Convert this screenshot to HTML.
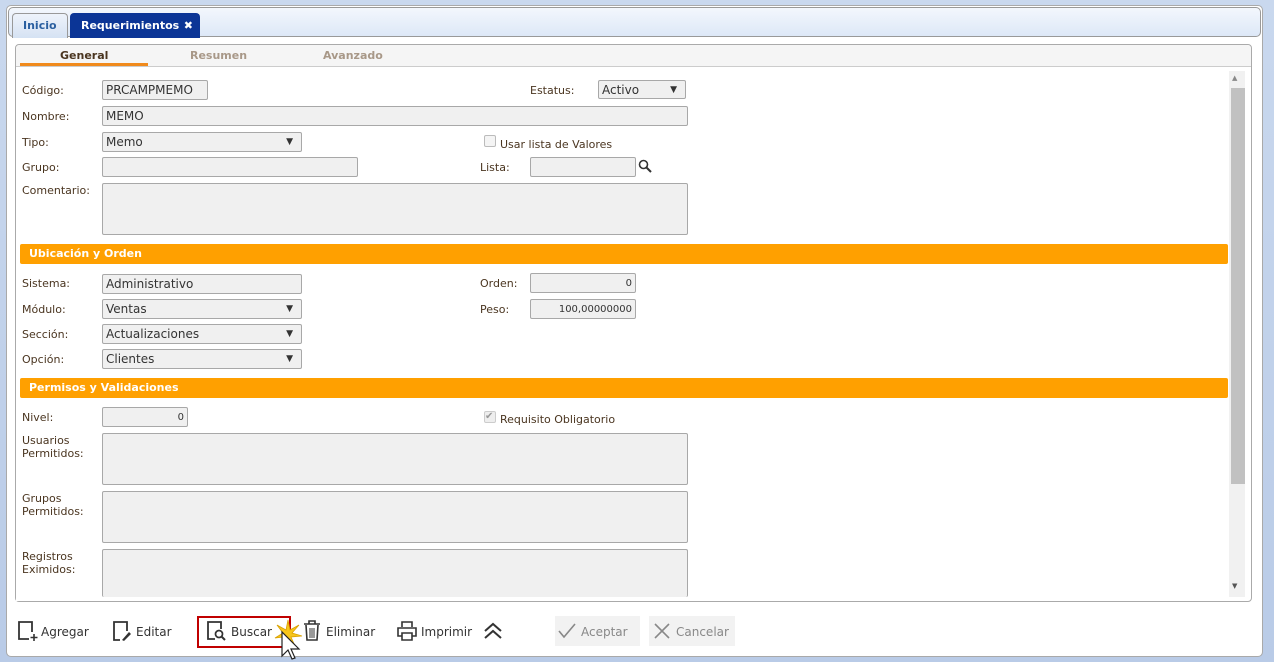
<!DOCTYPE html>
<html><head><meta charset="utf-8"><style>
*{box-sizing:border-box;margin:0;padding:0}
body{width:1274px;height:662px;overflow:hidden;background:linear-gradient(#c9d8ee,#b9cbe7);font-family:"DejaVu Sans","Liberation Sans",sans-serif;font-size:11px;color:#4a3520;position:relative}
.a{position:absolute}
#win{left:6px;top:5px;width:1257px;height:652px;background:#fff;border:1px solid #a9a9a9;border-radius:5px}
#tabbar{left:8px;top:7px;width:1253px;height:30px;background:linear-gradient(#f3f7fd,#dde8f7);border:1px solid #999;border-radius:5px}
.tab{position:absolute;top:5px;height:25px;border:1px solid #999;border-bottom:none;border-radius:4px 4px 0 0;font-weight:bold;font-size:11px;line-height:23px;padding:0 10px}
#inner{left:15px;top:44px;width:1237px;height:558px;border:1px solid #aaa;border-radius:4px}
#strip{left:16px;top:45px;width:1235px;height:22px;background:#f5f5f5;border-bottom:1px solid #ccc;border-radius:4px 4px 0 0}
.st{position:absolute;top:49px;font-weight:bold;font-size:11px;color:#a89888}
.l{position:absolute;font-size:11px;line-height:13px}
.i{position:absolute;background:#f0f0f0;border:1px solid #a8a8a8;border-radius:2px;font-size:12px;color:#333;padding:0 3px;line-height:19px}
.s:after{content:"▼";position:absolute;right:8px;top:0;font-size:9px;color:#333}
.r{text-align:right}
.bar{position:absolute;left:20px;width:1208px;height:20px;background:#ffa000;color:#fff;font-weight:bold;font-size:11px;line-height:20px;padding-left:9px;border-radius:2px}
.b{position:absolute;top:621px;font-size:12px;color:#333;line-height:22px}
</style></head><body>
<div id="win" class="a"></div>
<div id="tabbar" class="a">
<div class="tab" style="left:3px;background:linear-gradient(#eef3fb,#d5e2f3);color:#2a5fa0">Inicio</div>
<div class="tab" style="left:61px;background:#0b3596;color:#fff;border-color:#0b3596;width:130px">Requerimientos<span style="position:absolute;right:6px">✖</span></div>
</div>
<div id="inner" class="a"></div>
<div id="strip" class="a"></div>
<div class="a" style="left:20px;top:63px;width:128px;height:3px;background:#f08a1c"></div>
<div class="st" style="left:60px;color:#4a3520">General</div>
<div class="st" style="left:190px">Resumen</div>
<div class="st" style="left:323px">Avanzado</div>

<div class="l" style="left:22px;top:84px">Código:</div>
<div class="i" style="left:102px;top:80px;width:106px;height:20px">PRCAMPMEMO</div>
<div class="l" style="left:530px;top:84px">Estatus:</div>
<div class="i s" style="left:598px;top:80px;width:88px;height:19px">Activo</div>
<div class="l" style="left:22px;top:110px">Nombre:</div>
<div class="i" style="left:102px;top:106px;width:586px;height:20px">MEMO</div>
<div class="l" style="left:22px;top:136px">Tipo:</div>
<div class="i s" style="left:102px;top:132px;width:200px;height:20px">Memo</div>
<div class="a" style="left:484px;top:135px;width:12px;height:12px;border:1px solid #bbb;border-radius:2px;background:#f4f4f4"></div>
<div class="l" style="left:500px;top:138px">Usar lista de Valores</div>
<div class="l" style="left:22px;top:161px">Grupo:</div>
<div class="i" style="left:102px;top:157px;width:256px;height:20px"></div>
<div class="l" style="left:480px;top:161px">Lista:</div>
<div class="i" style="left:530px;top:157px;width:106px;height:20px"></div>
<svg class="a" style="left:638px;top:159px" width="14" height="14"><circle cx="5.5" cy="5.5" r="4" fill="none" stroke="#333" stroke-width="1.6"/><path d="M8.5 8.5L13 13" stroke="#333" stroke-width="2"/></svg>
<div class="l" style="left:22px;top:184px">Comentario:</div>
<div class="i" style="left:102px;top:183px;width:586px;height:52px"></div>

<div class="bar" style="top:244px">Ubicación y Orden</div>
<div class="l" style="left:22px;top:277px">Sistema:</div>
<div class="i" style="left:102px;top:274px;width:200px;height:20px">Administrativo</div>
<div class="l" style="left:480px;top:277px">Orden:</div>
<div class="i r" style="left:530px;top:273px;width:106px;height:20px;font-size:10px">0</div>
<div class="l" style="left:22px;top:303px">Módulo:</div>
<div class="i s" style="left:102px;top:299px;width:200px;height:20px">Ventas</div>
<div class="l" style="left:480px;top:303px">Peso:</div>
<div class="i r" style="left:530px;top:299px;width:106px;height:20px;font-size:10px">100,00000000</div>
<div class="l" style="left:22px;top:328px">Sección:</div>
<div class="i s" style="left:102px;top:324px;width:200px;height:20px">Actualizaciones</div>
<div class="l" style="left:22px;top:353px">Opción:</div>
<div class="i s" style="left:102px;top:349px;width:200px;height:20px">Clientes</div>

<div class="bar" style="top:378px">Permisos y Validaciones</div>
<div class="l" style="left:22px;top:411px">Nivel:</div>
<div class="i r" style="left:102px;top:407px;width:86px;height:20px;font-size:10px">0</div>
<div class="a" style="left:484px;top:411px;width:12px;height:12px;border:1px solid #ccc;border-radius:2px;background:#eee;color:#999;font-size:10px;line-height:10px">✔</div>
<div class="l" style="left:500px;top:413px">Requisito Obligatorio</div>
<div class="l" style="left:22px;top:434px">Usuarios<br>Permitidos:</div>
<div class="i" style="left:102px;top:433px;width:586px;height:52px"></div>
<div class="l" style="left:22px;top:492px">Grupos<br>Permitidos:</div>
<div class="i" style="left:102px;top:491px;width:586px;height:52px"></div>
<div class="l" style="left:22px;top:550px">Registros<br>Eximidos:</div>
<div class="i" style="left:102px;top:549px;width:586px;height:48px;border-bottom:none"></div>
<div class="a" style="left:16px;top:597px;width:1212px;height:4px;background:#fff"></div>

<div class="a" style="left:1229px;top:71px;width:16px;height:526px;background:#f1f1f1"></div>
<div class="a" style="left:1232px;top:74px;font-size:7px;color:#888">▲</div>
<div class="a" style="left:1231px;top:88px;width:14px;height:396px;background:#c1c1c1"></div>
<div class="a" style="left:1232px;top:582px;font-size:7px;color:#555">▼</div>

<svg class="a" style="left:17px;top:620px" width="22" height="22"><path d="M12 19H2V2h13v10" fill="none" stroke="#333" stroke-width="1.8"/><path d="M17 14v7M13.5 17.5h7" stroke="#333" stroke-width="1.6"/></svg>
<div class="b" style="left:41px">Agregar</div>
<svg class="a" style="left:112px;top:620px" width="22" height="22"><path d="M8 20H2V2h13v9" fill="none" stroke="#333" stroke-width="1.8"/><path d="M10 20l7-8 2 2-7 7z" fill="#333"/></svg>
<div class="b" style="left:136px">Editar</div>
<div class="a" style="left:197px;top:616px;width:94px;height:32px;border:2px solid #c00000"></div>
<svg class="a" style="left:206px;top:620px" width="22" height="22"><path d="M9 19H2V2h13v7" fill="none" stroke="#333" stroke-width="1.8"/><circle cx="13" cy="14" r="3.5" fill="none" stroke="#333" stroke-width="1.7"/><path d="M15.5 16.5L19 20" stroke="#333" stroke-width="2"/></svg>
<div class="b" style="left:231px">Buscar</div>
<svg class="a" style="left:268px;top:614px" width="40" height="48"><path d="M20 6l2 10 9-5-7 8 10 3-11 1 4 9-7-7-5 7 1-9-9 1 8-5-6-8 9 5z" fill="#f7c51a" stroke="#d9a000" stroke-width=".8"/><path d="M14 18v24l6-6 4 9 3-1-4-9h8z" fill="#fff" stroke="#222" stroke-width="1.2"/></svg>
<svg class="a" style="left:303px;top:620px" width="18" height="22"><path d="M1 4h16M6 4V1h6v3M3 5l1 15h10l1-15" fill="none" stroke="#333" stroke-width="1.6"/><path d="M7 8v10M9 8v10M11 8v10" stroke="#333"/></svg>
<div class="b" style="left:326px">Eliminar</div>
<svg class="a" style="left:397px;top:620px" width="20" height="22"><path d="M5 7V2h10v5M5 16H1V8h18v8h-4M5 13h10v7H5z" fill="none" stroke="#333" stroke-width="1.6"/></svg>
<div class="b" style="left:421px">Imprimir</div>
<svg class="a" style="left:483px;top:622px" width="20" height="18"><path d="M2 9l8-7 8 7M2 16l8-7 8 7" fill="none" stroke="#333" stroke-width="2"/></svg>
<div class="a" style="left:555px;top:616px;width:85px;height:30px;background:#f2f2f2"></div>
<svg class="a" style="left:558px;top:623px" width="18" height="16"><path d="M1 8l5 6L17 1" fill="none" stroke="#888" stroke-width="1.6"/></svg>
<div class="b" style="left:581px;color:#888">Aceptar</div>
<div class="a" style="left:649px;top:616px;width:86px;height:30px;background:#f2f2f2"></div>
<svg class="a" style="left:653px;top:622px" width="18" height="18"><path d="M2 2l14 14M16 2L2 16" stroke="#888" stroke-width="1.6"/></svg>
<div class="b" style="left:676px;color:#888">Cancelar</div>
</body></html>
